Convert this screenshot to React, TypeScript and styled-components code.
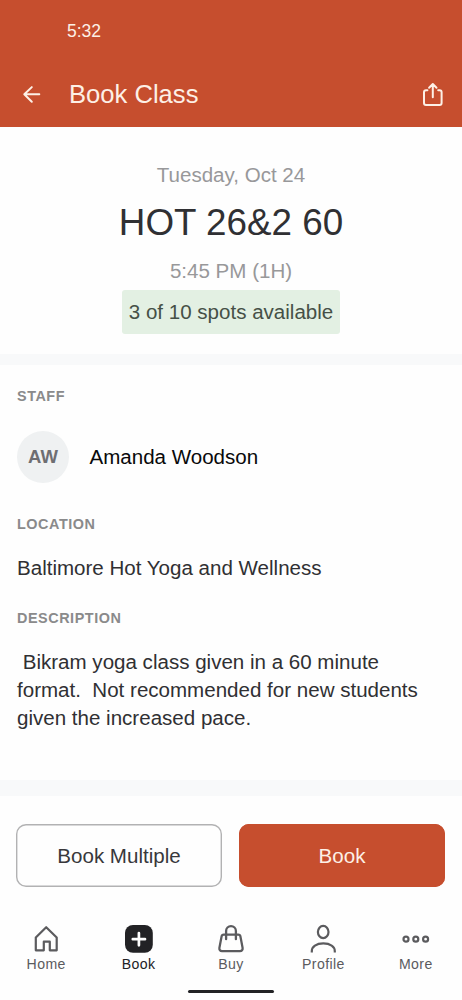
import React from "react";
import styled, { createGlobalStyle } from "styled-components";

const brand = "#c64e2e";

const GlobalStyle = createGlobalStyle`
  *, *::before, *::after { box-sizing: border-box; }
  body { margin: 0; background: #fefefe; }
  button { font: inherit; cursor: pointer; }
`;

const Screen = styled.div`
  width: 100%;
  height: 1000px;
  display: flex;
  flex-direction: column;
  background: #fefefe;
  color: #303033;
  font-family: "Liberation Sans", Arial, sans-serif;
  font-size: 20.55px;
  overflow: hidden;
`;

const Header = styled.header`
  height: 127px;
  background: ${brand};
  color: #fdf0e6;
`;

const StatusBar = styled.div`
  height: 61px;
  padding-left: 67px;
  font-size: 17.5px;
  line-height: 62px;
`;

const AppBar = styled.div`
  height: 66px;
  padding: 0 17px 0 20px;
  display: flex;
  align-items: center;
`;

const IconButton = styled.button`
  width: 24px;
  height: 28px;
  padding: 0;
  border: 0;
  background: none;
  color: inherit;
  display: flex;
`;

const AppTitle = styled.h1`
  flex: 1;
  margin: 0 0 1px 25px;
  font-size: 25.6px;
  font-weight: 400;
  line-height: 34px;
`;

const Summary = styled.section`
  height: 227px;
  padding-top: 34px;
  display: flex;
  flex-direction: column;
  align-items: center;
`;

const Muted = styled.div`
  color: #98989a;
  line-height: 28px;
`;

const ClassName = styled.h2`
  margin: 12px 0;
  font-size: 36.8px;
  font-weight: 400;
  line-height: 44px;
`;

const Spots = styled.div`
  width: 218px;
  height: 44px;
  margin-top: 5px;
  border-radius: 3px;
  background: #e3f0e3;
  color: #465047;
  line-height: 44px;
  text-align: center;
  white-space: nowrap;
`;

const Divider = styled.div<{ $size: number }>`
  flex: none;
  height: ${(p) => p.$size}px;
  background: #f8f9fa;
`;

const Details = styled.section`
  height: 415px;
  padding: 21px 17px 0;
`;

const Label = styled.h3`
  margin: 0;
  color: #8a8a8b;
  font-size: 14.4px;
  font-weight: 700;
  letter-spacing: 0.55px;
  line-height: 20px;
`;

const Person = styled.div`
  height: 52px;
  margin: 25px 0 31px;
  display: flex;
  align-items: center;
  gap: 20.5px;
  color: #09090a;
`;

const PersonName = styled.span`
  line-height: 24px;
  margin-bottom: 1px;
`;

const Avatar = styled.div`
  width: 52px;
  height: 52px;
  border-radius: 50%;
  background: #eff1f2;
  color: #6e6e72;
  font-size: 18.5px;
  font-weight: 700;
  line-height: 52px;
  text-align: center;
`;

const Place = styled.p`
  margin: 20px 0 26px;
  line-height: 28px;
`;

const Description = styled.p`
  margin: 20px 0 0;
  line-height: 28.2px;
  white-space: pre-wrap;
`;

const Actions = styled.div`
  height: 127px;
  padding: 28px 17px 0 16px;
  display: grid;
  grid-template-columns: 1fr 1fr;
  gap: 17px;
`;

const ActionButton = styled.button<{ $primary?: boolean }>`
  height: 63px;
  padding: 1px 0 0;
  border: 0;
  border-radius: 10px;
  box-shadow: inset 0 0 0 1.4px ${(p) => (p.$primary ? brand : "#b2b2b3")};
  background: ${(p) => (p.$primary ? brand : "#fefefe")};
  color: ${(p) => (p.$primary ? "#fdf0e6" : "#38383b")};
`;

const TabBar = styled.nav`
  display: grid;
  grid-template-columns: repeat(5, 1fr);
`;

const Tab = styled.a<{ $active?: boolean }>`
  display: flex;
  flex-direction: column;
  align-items: center;
  color: ${(p) => (p.$active ? "#222225" : "#5b5b5e")};
  font-size: 14.1px;
  letter-spacing: 0.4px;
  line-height: 18px;
`;

const HomeIndicator = styled.div`
  width: 86px;
  height: 3px;
  margin: 17px auto 0;
  border-radius: 2px;
  background: #222225;
`;

const Glyph = styled.svg`
  flex: none;
  display: block;
  fill: none;
  stroke: currentColor;
  stroke-width: 2;
  stroke-linecap: round;
  stroke-linejoin: round;
`;

const tabs = [
  {
    name: "Home",
    icon: <path strokeWidth="2.2" d="M5.8 27.3V14.5L16.2 4.2l10.5 10.3v12.8h-6.9v-8.6h-6v8.6z" />,
  },
  {
    name: "Book",
    active: true,
    icon: (
      <>
        <rect x="2" y="2" width="27.8" height="27.8" rx="8" fill="currentColor" stroke="none" />
        <path d="M15.9 10.1v12.2M9.8 16.2H22" stroke="#fefefe" strokeWidth="2.7" />
      </>
    ),
  },
  {
    name: "Buy",
    icon: (
      <>
        <path strokeWidth="2.3" d="M8.7 11.6h14.6c1.1 0 1.9.7 2.1 1.8l2.2 11.5c.3 1.8-.8 3.2-2.6 3.2H7c-1.8 0-2.9-1.4-2.6-3.2l2.2-11.5c.2-1.1 1-1.8 2.1-1.8z" />
        <path strokeWidth="2.3" d="M11.1 16.2V8a4.9 4.9 0 0 1 9.8 0v8.2" />
      </>
    ),
  },
  {
    name: "Profile",
    icon: (
      <>
        <ellipse cx="16.2" cy="9" rx="5.3" ry="6.1" strokeWidth="2.2" />
        <path strokeWidth="2.2" strokeLinecap="butt" d="M4.8 29.6v-1.4c0-4.6 4.5-7.8 11.5-7.8s11.5 3.2 11.5 7.8v1.4" />
      </>
    ),
  },
  {
    name: "More",
    icon: (
      <>
        <circle cx="6" cy="16.2" r="2.5" strokeWidth="2.2" />
        <circle cx="15.8" cy="16.2" r="2.5" strokeWidth="2.2" />
        <circle cx="25.6" cy="16.2" r="2.5" strokeWidth="2.2" />
      </>
    ),
  },
];

export default function App() {
  return (
    <Screen>
      <GlobalStyle />
      <Header>
        <StatusBar>5:32</StatusBar>
        <AppBar>
          <IconButton aria-label="Back">
            <Glyph width="24" height="28" viewBox="0 0 24 28">
              <path d="M19.3 14.3H4.4M11.8 7.1l-7.5 7.2 7.5 7.4" />
            </Glyph>
          </IconButton>
          <AppTitle>Book Class</AppTitle>
          <IconButton aria-label="Share">
            <Glyph width="24" height="28" viewBox="0 0 24 28">
              <path d="M6.4 10.3H5a2 2 0 0 0-2 2V23a2 2 0 0 0 2 2h13.600a2 2 0 0 0 2-2V12.300a2 2 0 0 0-2-2h-1.400M11.800 17.200V4M8.100 7.700L11.800 4l3.700 3.700" />
            </Glyph>
          </IconButton>
        </AppBar>
      </Header>
      <Summary>
        <Muted>Tuesday, Oct 24</Muted>
        <ClassName>HOT 26&amp;2 60</ClassName>
        <Muted>5:45 PM (1H)</Muted>
        <Spots>3 of 10 spots available</Spots>
      </Summary>
      <Divider $size={11} />
      <Details>
        <Label>STAFF</Label>
        <Person>
          <Avatar>AW</Avatar>
          <PersonName>Amanda Woodson</PersonName>
        </Person>
        <Label>LOCATION</Label>
        <Place>Baltimore Hot Yoga and Wellness</Place>
        <Label>DESCRIPTION</Label>
        <Description>
          {" Bikram yoga class given in a 60 minute format.  Not recommended for new students given the increased pace."}
        </Description>
      </Details>
      <Divider $size={16} />
      <Actions>
        <ActionButton>Book Multiple</ActionButton>
        <ActionButton $primary>Book</ActionButton>
      </Actions>
      <TabBar>
        {tabs.map((tab) => (
          <Tab key={tab.name} $active={tab.active}>
            <Glyph width="32" height="32" viewBox="0 0 32 32">
              {tab.icon}
            </Glyph>
            {tab.name}
          </Tab>
        ))}
      </TabBar>
      <HomeIndicator />
    </Screen>
  );
}
